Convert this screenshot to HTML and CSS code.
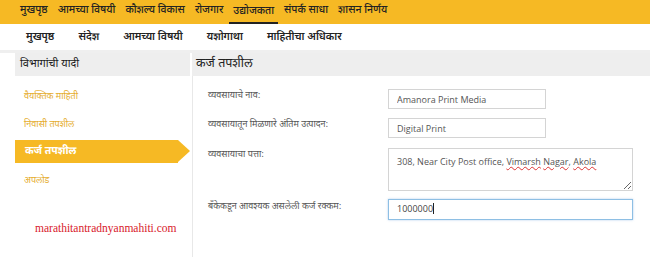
FILE: index.html
```html
<!DOCTYPE html>
<html lang="mr">
<head>
    <meta charset="UTF-8">
    <meta name="viewport" content="width=device-width, initial-scale=1.0">
    <title>कर्ज तपशील</title>
    <link rel="stylesheet" href="styles.css">
</head>
<body>
    <nav class="top-nav">
        <a href="#">मुखपृष्ठ</a>
        <a href="#">आमच्या विषयी</a>
        <a href="#">कौशल्य विकास</a>
        <a href="#">रोजगार</a>
        <a href="#" class="active">उद्योजकता</a>
        <a href="#">संपर्क साधा</a>
        <a href="#">शासन निर्णय</a>
    </nav>

    <nav class="sub-nav">
        <a href="#">मुखपृष्ठ</a>
        <a href="#">संदेश</a>
        <a href="#">आमच्या विषयी</a>
        <a href="#">यशोगाथा</a>
        <a href="#">माहितीचा अधिकार</a>
    </nav>

    <div class="main">
        <aside class="side">
            <div class="panel-head">विभागांची यादी</div>
            <ul class="side-list">
                <li><a href="#">वैयक्तिक माहिती</a></li>
                <li><a href="#">निवासी तपशील</a></li>
                <li class="current"><a href="#">कर्ज तपशील</a></li>
                <li><a href="#">अपलोड</a></li>
            </ul>
            <div class="site-name">marathitantradnyanmahiti.com</div>
        </aside>

        <section class="content">
            <div class="panel-head">कर्ज तपशील</div>
            <form class="loan-form">
                <label>व्यवसायाचे नाव:</label>
                <input type="text" class="field short" value="Amanora Print Media">

                <label>व्यवसायातून मिळणारे अंतिम उत्पादन:</label>
                <input type="text" class="field short" value="Digital Print">

                <label class="area-label">व्यवसायाचा पत्ता:</label>
                <div class="field area">308, Near City Post office, <span class="typo">Vimarsh</span> <span class="typo">Nagar</span>, <span class="typo">Akola</span></div>

                <label>बँकेकडून आवश्यक असलेली कर्ज रक्कम:</label>
                <div class="field focus">1000000<span class="caret"></span></div>
            </form>
        </section>
    </div>
</body>
</html>
```

FILE: styles.css
```css
body {
    margin: 0;
    font-family: 'Noto Sans Devanagari', 'Noto Sans', sans-serif;
    background-color: #fff;
    color: #222;
    width: 650px;
    height: 258px;
    overflow: hidden;
}

a {
    color: inherit;
    text-decoration: none;
}

/* gelbe Hauptnavigation */
.top-nav {
    display: flex;
    align-items: center;
    height: 24px;
    padding-left: 20px;
    gap: 10px;
    background-color: #f6b924;
}

.top-nav a {
    font-size: 10.5px;
    font-weight: 500;
    line-height: 22px;
    border-bottom: 2px solid transparent;
}

.top-nav a.active {
    border-bottom-color: #222;
    padding: 0 4px;
    margin: 2px -4px 0;
    line-height: 20px;
}

.sub-nav {
    display: flex;
    align-items: center;
    height: 26px;
    padding-left: 26px;
    gap: 24px;
    border-bottom: 3px solid #efefef;
}

.sub-nav a {
    font-size: 10.5px;
    font-weight: 600;
}

.main {
    display: grid;
    grid-template-columns: 175px 1fr;
    gap: 2px;
    padding-left: 15px;
}

.panel-head {
    background-color: #eeeeee;
    height: 23px;
    line-height: 23px;
    font-size: 11px;
    padding-left: 5px;
}

.side-list {
    list-style: none;
    margin: 0;
    padding: 7px 0 0;
}

.side-list li {
    height: 28px;
    line-height: 28px;
    padding-left: 9px;
    font-size: 9px;
    color: #e5ac2c;
}

.side-list li.current {
    position: relative;
    height: 23px;
    line-height: 23px;
    margin: 1px 12px 4px 0;
    padding-left: 10px;
    background-color: #f6b924;
    color: #fff;
    font-size: 10.5px;
    font-weight: 700;
}

/* Pfeilspitze am aktiven Eintrag */
.side-list li.current::after {
    content: "";
    position: absolute;
    top: 0;
    right: -12px;
    border-top: 11.5px solid transparent;
    border-bottom: 11.5px solid transparent;
    border-left: 12px solid #f6b924;
}

.site-name {
    margin: 27px 0 0 20px;
    font-family: 'Liberation Serif', serif;
    font-size: 11.5px;
    color: #d8202b;
}

.content .panel-head {
    padding-left: 4px;
    font-size: 12.5px;
}

.loan-form {
    display: grid;
    grid-template-columns: 180px 1fr;
    row-gap: 9px;
    align-items: start;
    align-content: start;
    padding: 13px 0 0 15px;
    border-left: 1px solid #e8e8e8;
    height: 168px;
}

.loan-form label {
    font-size: 9px;
    line-height: 14px;
    color: #555;
}

.field {
    box-sizing: border-box;
    height: 20px;
    border: 1px solid #d4d4d4;
    padding: 0 8px;
    font-family: 'Open Sans', sans-serif;
    font-size: 9px;
    color: #555;
    line-height: 18px;
    background-color: #fff;
    outline: none;
}

.field.short {
    width: 158px;
}

.area-label {
    margin-top: 1px;
}

.field.area {
    width: 245px;
    height: 43px;
    margin-top: 1px;
    padding-top: 4px;
    resize: both;
    overflow: auto;
}

.field.focus {
    width: 245px;
    height: 21px;
    margin-top: -1px;
    border-color: #8ebfe4;
    box-shadow: 0 0 2px rgba(100, 160, 220, 0.5);
    color: #444;
}

.typo {
    text-decoration: underline wavy #d33;
    text-decoration-thickness: 1px;
}

.caret {
    display: inline-block;
    width: 1px;
    height: 11px;
    background-color: #222;
    vertical-align: -2px;
}
```
